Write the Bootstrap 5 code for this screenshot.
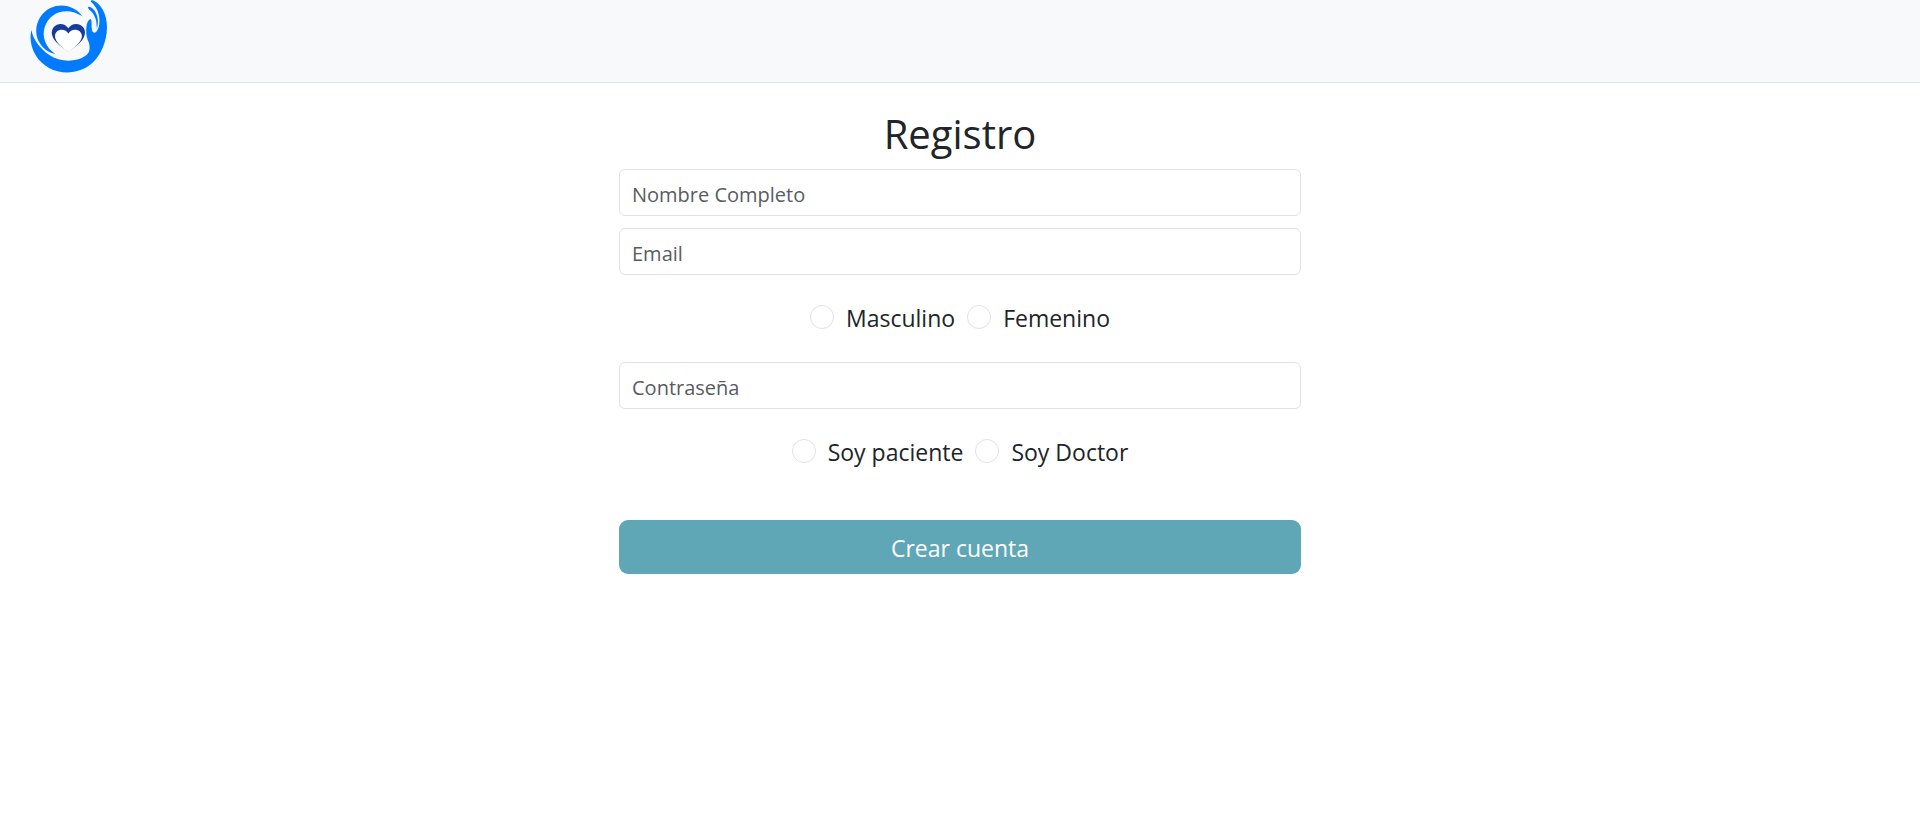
<!DOCTYPE html>
<html lang="es">
<head>
<meta charset="utf-8">
<meta name="viewport" content="width=device-width, initial-scale=1">
<title>Registro</title>
<link href="https://cdn.jsdelivr.net/npm/bootstrap@5.3.0/dist/css/bootstrap.min.css" rel="stylesheet">
<style>
  body { font-family: "Open Sans", "Noto Sans", sans-serif; color: #212529; }
  .site-bar { background: #f8f9fa; border-bottom: 1px solid #dee2e6; padding: 0 30px 8px; }
  .site-logo { width: 78px; height: 74px; }
  .signup { max-width: 682px; padding-top: 26px; }
  .signup h1 { font-size: 40px; line-height: 50px; margin-bottom: 10px; font-weight: 400; }
  .signup .form-control { height: 47px; padding: 10px 12px 6px; font-size: 20px; line-height: 30px; border-color: #dee2e6; border-radius: 6px; }
  .signup .form-control + .form-control { margin-top: 12px; }
  .signup .form-control::placeholder { color: #595c5f; }
  .choices { gap: 12px; margin: 24px 0 27px; font-size: 23px; line-height: 36px; }
  .choices .form-check-input { width: 24px; height: 24px; margin: 0; border-color: #dee2e6; }
  .choices label { margin-left: 12px; padding-top: 2px; line-height: 34px; }
  .btn-create { padding: 10px 16px 8px; margin-top: 24px; border-radius: 9px; font-size: 23px; line-height: 36px; color: #fff; background: #5fa7b7; border: 0; }
  .btn-create:hover { color: #fff; background: #4f96a6; }
</style>
</head>
<body>
<nav class="site-bar d-flex">
  <a href="#" class="d-block" aria-label="Inicio">
    <svg class="site-logo d-block" viewBox="30 0 234 222" aria-hidden="true">
      <path fill="#007bff" d="M34 90C40 118 58 145 88 165C118 187 168 187 194 169C211 160 210 143 207 129C198 112 197 92 200 75C202 64 209 55 213 58C216 62 214 78 216 91C218 100 227 100 231 92C238 82 240 66 237 47C234 29 224 15 213 5C211 1 214 0 218 1C243 11 261 41 261 83C260 125 243 165 216 190C183 220 127 226 87 204C47 182 24 137 34 90Z"/>
      <path fill="#007bff" d="M205 20C217 20 228 34 232 51C235 64 234 75 231 84C229 79 231 68 226 55C222 42 215 34 208 29C204 25 203 22 205 20Z"/>
      <path fill="#007bff" d="M187 49C168 20 127 7 91 24C53 43 39 89 56 124C67 145 85 159 106 162C77 143 65 111 74 82C88 34 144 19 187 49Z"/>
      <path fill="#173b9c" d="M96 104C90 75 128 59 145 85C161 59 202 75 194 104C189 126 162 142 145 155C128 142 101 126 96 104Z"/>
      <path fill="#fff" d="M145 156C122 139 105 125 105 108C106 85 137 84 145 101C153 84 184 85 186 108C185 125 168 139 145 156Z"/>
    </svg>
  </a>
</nav>
<main class="container-fluid">
  <form class="signup mx-auto">
    <h1 class="text-center">Registro</h1>
    <input type="text" class="form-control" placeholder="Nombre Completo" aria-label="Nombre Completo">
    <input type="email" class="form-control" placeholder="Email" aria-label="Email">
    <div class="choices d-flex flex-wrap justify-content-center">
      <div class="d-flex align-items-center"><input class="form-check-input" type="radio" name="genero" id="masculino"><label for="masculino">Masculino</label></div>
      <div class="d-flex align-items-center"><input class="form-check-input" type="radio" name="genero" id="femenino"><label for="femenino">Femenino</label></div>
    </div>
    <input type="password" class="form-control" placeholder="Contraseña" aria-label="Contraseña">
    <div class="choices d-flex flex-wrap justify-content-center">
      <div class="d-flex align-items-center"><input class="form-check-input" type="radio" name="rol" id="paciente"><label for="paciente">Soy paciente</label></div>
      <div class="d-flex align-items-center"><input class="form-check-input" type="radio" name="rol" id="doctor"><label for="doctor">Soy Doctor</label></div>
    </div>
    <button type="submit" class="btn btn-create w-100">Crear cuenta</button>
  </form>
</main>
<script src="https://cdn.jsdelivr.net/npm/bootstrap@5.3.0/dist/js/bootstrap.bundle.min.js"></script>
</body>
</html>
